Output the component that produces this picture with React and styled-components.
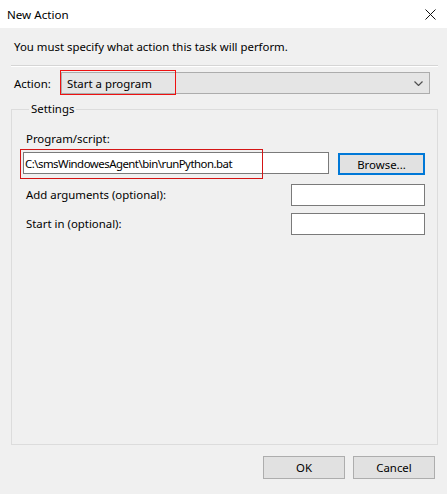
import React from "react";
import styled, { createGlobalStyle } from "styled-components";

const GlobalStyle = createGlobalStyle`
  html, body {
    margin: 0;
    padding: 0;
    background: #f0f0f0;
  }
  body {
    font-family: "Noto Sans", "Open Sans", "Liberation Sans", sans-serif;
    font-size: 11.4px;
    color: #000;
  }
`;

const Window = styled.div`
  width: 447px;
  height: 494px;
  display: flex;
  flex-direction: column;
  background: #f0f0f0;
  overflow: hidden;
`;

const TitleBar = styled.div`
  height: 28px;
  flex: none;
  background: #fff;
  display: flex;
  align-items: center;
  justify-content: space-between;
  padding: 0 8px 0 7px;
  font-size: 11.6px;
`;

const CloseIcon = styled.svg`
  width: 11px;
  height: 11px;
  margin-right: 3px;
`;

const Body = styled.div`
  flex: 1;
  display: flex;
  flex-direction: column;
  padding: 11px 9px 0 11px;
`;

const Intro = styled.div`
  padding-left: 3px;
  line-height: 16px;
`;

const Separator = styled.div`
  margin-top: 10px;
  height: 1px;
  background: #d5d5d5;
  border-bottom: 1px solid #fff;
`;

const ActionRow = styled.div`
  margin-top: 5px;
  display: flex;
  align-items: center;
  padding: 0 8px 0 3px;
`;

const ActionLabel = styled.span`
  width: 47px;
  flex: none;
`;

const Highlight = styled.div`
  position: absolute;
  border: 1px solid ${(p) => p.$color};
  pointer-events: none;
`;

const Combo = styled.div`
  position: relative;
  flex: 1;
  height: 22px;
  box-sizing: border-box;
  background: #e5e5e5;
  border: 1px solid #acacac;
  display: flex;
  align-items: center;
  justify-content: space-between;
  padding: 0 6px 0 5px;
`;

const Chevron = styled.svg`
  width: 9px;
  height: 5px;
`;

const Group = styled.fieldset`
  margin: 7px 0 0 0;
  min-width: 0;
  flex: 1;
  border: 1px solid #dcdcdc;
  padding: 14px 12px 0 11px;
  display: flex;
  flex-direction: column;
`;

const Legend = styled.legend`
  padding: 0 2px;
  margin-left: 6px;
  line-height: 16px;
`;

const FieldLabel = styled.span`
  padding-left: 3px;
  line-height: 16px;
`;

const ProgramRow = styled.div`
  margin-top: 5px;
  display: flex;
  gap: 9px;
  align-items: flex-start;
`;

const InputWrap = styled.div`
  position: relative;
  flex: ${(p) => (p.$width ? "none" : "1")};
  width: ${(p) => (p.$width ? `${p.$width}px` : "auto")};
`;

const TextBox = styled.div`
  height: 22px;
  box-sizing: border-box;
  background: #fff;
  border: 1px solid #7a7a7a;
  display: flex;
  align-items: center;
  padding-left: 1px;
  white-space: nowrap;
  letter-spacing: -0.5px;
`;

const Button = styled.div`
  width: ${(p) => p.$width}px;
  height: ${(p) => (p.$primary ? 22 : 23)}px;
  box-sizing: border-box;
  background: #e1e1e1;
  border: ${(p) => (p.$primary ? "2px solid #0078d7" : "1px solid #adadad")};
  display: flex;
  align-items: center;
  justify-content: center;
  flex: none;
  margin-top: ${(p) => (p.$primary ? 1 : 0)}px;
`;

const ArgRow = styled.div`
  margin-top: ${(p) => p.$top}px;
  display: flex;
  align-items: center;
  justify-content: space-between;
`;

const Footer = styled.div`
  display: flex;
  justify-content: flex-end;
  gap: 8px;
  padding: 11px 3px 15px 0;
`;

export default function App() {
  return (
    <>
      <GlobalStyle />
      <Window>
        <TitleBar>
          <span>New Action</span>
          <CloseIcon viewBox="0 0 11 11">
            <path d="M0.5 0.5 L10.5 10.5 M10.5 0.5 L0.5 10.5" stroke="#111" strokeWidth="1" fill="none" />
          </CloseIcon>
        </TitleBar>
        <Body>
          <Intro>You must specify what action this task will perform.</Intro>
          <Separator />
          <ActionRow>
            <ActionLabel>Action:</ActionLabel>
            <Combo>
              <span>Start a program</span>
              <Chevron viewBox="0 0 9 5">
                <path d="M0.5 0.5 L4.5 4.5 L8.5 0.5" stroke="#505050" strokeWidth="1.2" fill="none" />
              </Chevron>
              <Highlight $color="#ee1111" style={{ left: -2, top: -3, width: 114, height: 23 }} />
            </Combo>
          </ActionRow>
          <Group>
            <Legend>Settings</Legend>
            <FieldLabel>Program/script:</FieldLabel>
            <ProgramRow>
              <InputWrap>
                <TextBox>C:\smsWindowesAgent\bin\runPython.bat</TextBox>
                <Highlight $color="#d41515" style={{ left: -3, top: -3, width: 241, height: 28 }} />
              </InputWrap>
              <Button $primary $width={87}>Browse...</Button>
            </ProgramRow>
            <ArgRow $top={9}>
              <FieldLabel>Add arguments (optional):</FieldLabel>
              <InputWrap $width={134}>
                <TextBox />
              </InputWrap>
            </ArgRow>
            <ArgRow $top={7}>
              <FieldLabel>Start in (optional):</FieldLabel>
              <InputWrap $width={134}>
                <TextBox />
              </InputWrap>
            </ArgRow>
          </Group>
          <Footer>
            <Button $width={82}>OK</Button>
            <Button $width={82}>Cancel</Button>
          </Footer>
        </Body>
      </Window>
    </>
  );
}
